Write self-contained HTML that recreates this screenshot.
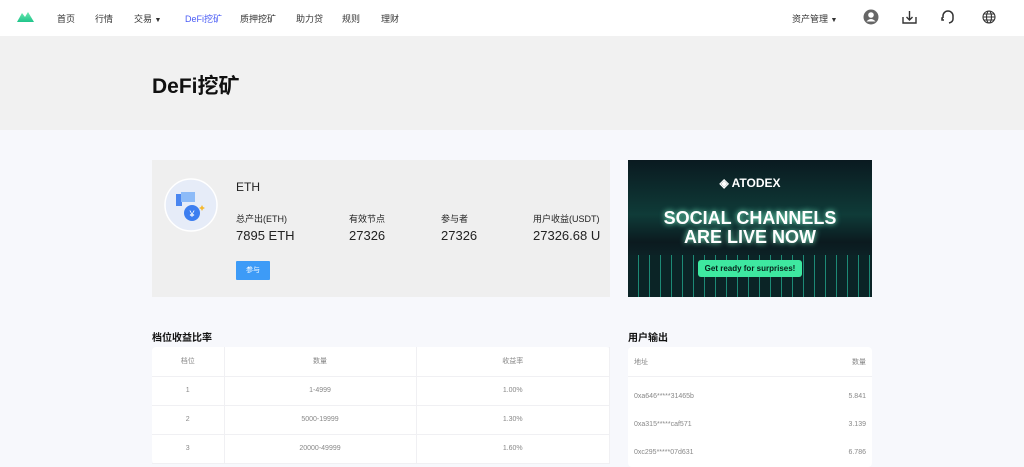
<!DOCTYPE html>
<html><head><meta charset="utf-8"><style>
*{margin:0;padding:0;box-sizing:border-box}
body{width:1024px;height:462px;overflow:hidden;background:#f7f8fc;font-family:"Liberation Sans","Noto Sans CJK SC",sans-serif;color:#222;position:relative}
.hdr{position:absolute;left:0;top:0;width:1024px;height:36px;background:#fff}
.nav{position:absolute;top:12px;font-size:9px;color:#333}
.ban{position:absolute;left:0;top:36px;width:1024px;height:94px;background:#f1f1f1}
.ban h1{position:absolute;left:152px;top:34px;font-size:21px;font-weight:bold;color:#111}
.card{position:absolute;left:152px;top:160px;width:458px;height:137px;background:#efefef}
.lab{position:absolute;font-size:9px;color:#222}
.val{position:absolute;font-size:13px;color:#222}
.tt{position:absolute;font-size:10px;font-weight:bold;color:#111}
table{border-collapse:collapse;background:#fff;font-size:7px;color:#888;border-radius:4px}
td{height:29px;text-align:center;border-right:1px solid #f0f0f3;border-bottom:1px solid #f0f0f3}
</style></head><body>
<div class="hdr">
<svg style="position:absolute;left:17px;top:11px" width="17" height="11"><defs><linearGradient id="g" x1="0" x2="0" y1="0" y2="1"><stop offset="0" stop-color="#6ee8b0"/><stop offset="1" stop-color="#1fc48a"/></linearGradient></defs><path d="M0 11 L5 2 L8 6 L11 1 L17 11Z" fill="url(#g)"/></svg>
<span class="nav" style="left:57px">首页</span>
<span class="nav" style="left:95px">行情</span>
<span class="nav" style="left:134px">交易 <span style="font-size:7px">▼</span></span>
<span class="nav" style="left:185px;color:#4a5cf5">DeFi挖矿</span>
<span class="nav" style="left:240px">质押挖矿</span>
<span class="nav" style="left:296px">助力贷</span>
<span class="nav" style="left:342px">规则</span>
<span class="nav" style="left:381px">理财</span>
<span class="nav" style="left:792px">资产管理 <span style="font-size:7px">▼</span></span>
<svg style="position:absolute;left:863px;top:9px" width="16" height="16"><circle cx="8" cy="8" r="7.5" fill="#666"/><circle cx="8" cy="6" r="2.8" fill="#fff"/><path d="M3.5 12.5 Q8 7.5 12.5 12.5" fill="#fff"/></svg>
<svg style="position:absolute;left:902px;top:10px" width="15" height="14" fill="none" stroke="#333" stroke-width="1.4"><path d="M1 7 V13 H14 V7 M7.5 1 V10 M4.5 7 L7.5 10 L10.5 7"/></svg>
<svg style="position:absolute;left:940px;top:9px" width="16" height="16" fill="none" stroke="#333" stroke-width="1.5"><path d="M3 9 V7 A5 5 0 0 1 13 7 V10 M3 9 H2 V11 H4 M13 10 Q13 13 9 14"/></svg>
<svg style="position:absolute;left:982px;top:10px" width="14" height="14" fill="none" stroke="#333" stroke-width="1.1"><circle cx="7" cy="7" r="6"/><ellipse cx="7" cy="7" rx="2.5" ry="6"/><path d="M1 7H13M2 4H12M2 10H12"/></svg>
</div>
<div class="ban"><h1>DeFi挖矿</h1></div>
<div class="card">
<svg style="position:absolute;left:12px;top:18px" width="54" height="54"><circle cx="27" cy="27" r="26" fill="#e6ecf8" stroke="#fff" stroke-width="1.5"/><rect x="12" y="16" width="6" height="12" fill="#4a86f0"/><rect x="17" y="14" width="14" height="10" fill="#8dbbf8"/><circle cx="28" cy="35" r="8" fill="#3d7ef0"/><text x="28" y="39" font-size="9" fill="#fff" text-anchor="middle">¥</text><path d="M38 27 l1 2 l2 1 l-2 1 l-1 2 l-1-2 l-2-1 l2-1z" fill="#f5b82e"/></svg>
<span style="position:absolute;left:84px;top:20px;font-size:12px">ETH</span>
<span class="lab" style="left:84px;top:52px">总产出(ETH)</span>
<span class="lab" style="left:197px;top:52px">有效节点</span>
<span class="lab" style="left:289px;top:52px">参与者</span>
<span class="lab" style="left:381px;top:52px">用户收益(USDT)</span>
<span class="val" style="left:84px;top:68px">7895 ETH</span>
<span class="val" style="left:197px;top:68px">27326</span>
<span class="val" style="left:289px;top:68px">27326</span>
<span class="val" style="left:381px;top:68px">27326.68 U</span>
<div style="position:absolute;left:84px;top:101px;width:34px;height:19px;background:#3d9bf7;color:#fff;font-size:7px;text-align:center;line-height:19px;border-radius:1px">参与</div>
</div>
<div style="position:absolute;left:628px;top:160px;width:244px;height:137px;background:linear-gradient(180deg,#0a1a20 0%,#0f3b38 40%,#0b1a1f 60%,#0e3a3a 100%);overflow:hidden;text-align:center;color:#fff">
<div style="position:absolute;left:0;top:95px;width:244px;height:42px;background:repeating-linear-gradient(90deg,#0b2426 0 10px,#1d8a76 10px 11px)"></div>
<div style="position:absolute;top:16px;width:244px;font-size:12px;font-weight:bold">◈ ATODEX</div>
<div style="position:absolute;top:49px;width:244px;font-size:18px;font-weight:bold;line-height:19px;text-shadow:0 0 6px #7fffd0">SOCIAL CHANNELS<br>ARE LIVE NOW</div>
<div style="position:absolute;left:70px;top:100px;width:104px;height:17px;background:#3ee8a0;color:#06201a;font-size:8px;font-weight:bold;line-height:17px;border-radius:3px">Get ready for surprises!</div>
</div>
<div class="tt" style="left:152px;top:329px">档位收益比率</div>
<table style="position:absolute;left:152px;top:347px;width:458px">
<tr><td style="width:72px">档位</td><td style="width:192px">数量</td><td>收益率</td></tr>
<tr><td>1</td><td>1-4999</td><td>1.00%</td></tr>
<tr><td>2</td><td>5000-19999</td><td>1.30%</td></tr>
<tr><td>3</td><td>20000-49999</td><td>1.60%</td></tr>
</table>
<div class="tt" style="left:628px;top:329px">用户输出</div>
<div style="position:absolute;left:628px;top:347px;width:244px;height:120px;background:#fff;font-size:7px;color:#888;border-radius:4px">
<div style="height:30px;border-bottom:1px solid #f0f0f3;position:relative"><span style="position:absolute;left:6px;top:10px">地址</span><span style="position:absolute;right:6px;top:10px">数量</span></div>
<div style="position:absolute;left:6px;top:46px">0xa646*****31465b</div><div style="position:absolute;right:6px;top:46px">5.841</div>
<div style="position:absolute;left:6px;top:74px">0xa315*****caf571</div><div style="position:absolute;right:6px;top:74px">3.139</div>
<div style="position:absolute;left:6px;top:102px">0xc295*****07d631</div><div style="position:absolute;right:6px;top:102px">6.786</div>
</div>
</body></html>
